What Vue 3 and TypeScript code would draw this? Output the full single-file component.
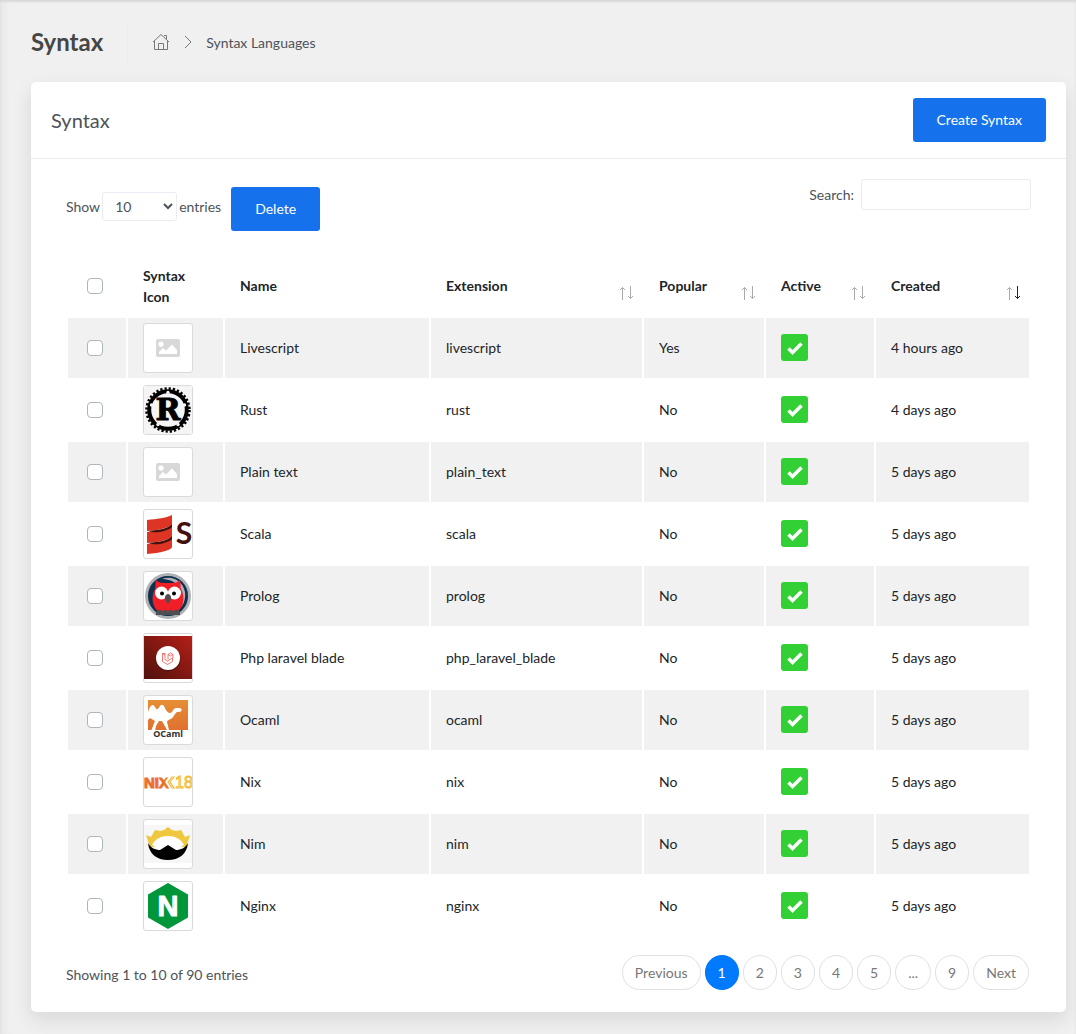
<script setup lang="ts">
import { ref } from 'vue'

interface Row {
  name: string
  extension: string
  popular: boolean
  created: string
  icon: string
}

const rows: Row[] = [
  { name: 'Livescript', extension: 'livescript', popular: true, created: '4 hours ago', icon: 'none' },
  { name: 'Rust', extension: 'rust', popular: false, created: '4 days ago', icon: 'rust' },
  { name: 'Plain text', extension: 'plain_text', popular: false, created: '5 days ago', icon: 'none' },
  { name: 'Scala', extension: 'scala', popular: false, created: '5 days ago', icon: 'scala' },
  { name: 'Prolog', extension: 'prolog', popular: false, created: '5 days ago', icon: 'prolog' },
  { name: 'Php laravel blade', extension: 'php_laravel_blade', popular: false, created: '5 days ago', icon: 'laravel' },
  { name: 'Ocaml', extension: 'ocaml', popular: false, created: '5 days ago', icon: 'ocaml' },
  { name: 'Nix', extension: 'nix', popular: false, created: '5 days ago', icon: 'nix' },
  { name: 'Nim', extension: 'nim', popular: false, created: '5 days ago', icon: 'nim' },
  { name: 'Nginx', extension: 'nginx', popular: false, created: '5 days ago', icon: 'nginx' },
]

const sortable = ['Extension', 'Popular', 'Active', 'Created']
const pages = ['Previous', '1', '2', '3', '4', '5', '...', '9', 'Next']
const current = ref('1')
const pageSize = ref('10')
const search = ref('')
const selected = ref<string[]>([])

function toggleAll(event: Event) {
  const on = (event.target as HTMLInputElement).checked
  selected.value = on ? rows.map((row) => row.name) : []
}
</script>

<template>
  <div class="page">
    <header class="page-head">
      <h1>Syntax</h1>
      <nav class="crumbs" aria-label="Breadcrumb">
        <a href="#" class="home" aria-label="Home">
          <svg width="18" height="18" viewBox="0 0 18 18" fill="none" stroke="#777" stroke-width="1">
            <path d="M1 9 9 1.500 17 9M2.500 8v8.500h13V8M6.500 16.500v-6h5v6M12 2.500h2.500V6" />
          </svg>
        </a>
        <svg class="chevron" width="8" height="14" viewBox="0 0 8 14" fill="none" stroke="#777">
          <path d="M1 1l6 6-6 6" />
        </svg>
        <span>Syntax Languages</span>
      </nav>
    </header>

    <main class="card">
      <div class="card-head">
        <h2>Syntax</h2>
        <button type="button" class="btn">Create Syntax</button>
      </div>

      <div class="card-body">
        <div class="toolbar">
          <div class="tools">
            <label class="length">
              Show
              <select v-model="pageSize">
                <option>10</option>
                <option>25</option>
                <option>50</option>
              </select>
              entries
            </label>
            <button type="button" class="btn">Delete</button>
          </div>
          <label class="search">
            Search:
            <input v-model="search" type="search" />
          </label>
        </div>

        <table>
          <colgroup>
            <col class="c-check" />
            <col class="c-icon" />
            <col class="c-name" />
            <col class="c-ext" />
            <col class="c-pop" />
            <col class="c-act" />
            <col class="c-date" />
          </colgroup>
          <thead>
            <tr>
              <th><input type="checkbox" aria-label="Select all" @change="toggleAll" /></th>
              <th>Syntax Icon</th>
              <th>Name</th>
              <th v-for="title in sortable" :key="title">
                {{ title }}
                <button type="button" class="sort" :aria-label="'Sort by ' + title">
                  <svg width="15" height="14" viewBox="0 0 15 14" fill="none" stroke="#aaa">
                    <path d="M3.500 14V1.500M1 4l2.500-2.500L6 4" />
                    <path :class="{ on: title === 'Created' }" d="M11.500 0v12.500M9 10l2.500 2.500L14 10" />
                  </svg>
                </button>
              </th>
            </tr>
          </thead>
          <tbody>
            <tr v-for="row in rows" :key="row.name">
              <td><input v-model="selected" type="checkbox" :value="row.name" :aria-label="'Select ' + row.name" /></td>
              <td>
                <div class="thumb">
                  <svg v-if="row.icon === 'none'" viewBox="0 0 48 48">
                    <path fill="#d8d8d8" fill-rule="evenodd" d="M14 15h20a2 2 0 0 1 2 2v14a2 2 0 0 1-2 2H14a2 2 0 0 1-2-2V17a2 2 0 0 1 2-2ZM17 17.500a2.700 2.700 0 1 0 .01 0ZM15 30h18v-4l-5-5.500-6 6-3-2.500-4 4Z" />
                  </svg>

                  <svg v-else-if="row.icon === 'rust'" viewBox="0 0 48 48">
                    <rect width="48" height="48" fill="#f5f5f5" />
                    <circle cx="24" cy="24" r="21.500" fill="none" stroke="#000" stroke-width="2.500" stroke-dasharray="2.250 1.972" />
                    <circle cx="24" cy="24" r="18.800" fill="none" stroke="#000" stroke-width="4" />
                    <g fill="#f5f5f5">
                      <circle cx="24" cy="6.500" r="1.700" />
                      <circle cx="7.500" cy="19" r="1.700" />
                      <circle cx="40.500" cy="19" r="1.700" />
                      <circle cx="14" cy="38.500" r="1.700" />
                      <circle cx="34" cy="38.500" r="1.700" />
                    </g>
                    <text x="24" y="34" text-anchor="middle" class="rust-r">R</text>
                  </svg>

                  <svg v-else-if="row.icon === 'scala'" viewBox="0 0 48 48">
                    <g fill="#de3423">
                      <path d="M3 10c10-1 19-2 25-5v9c0 3-12 6-25 7z" />
                      <path d="M3 22c11-1 21-3 25-6v10c0 3-12 6-25 7z" />
                      <path d="M3 34c11-1 21-3 25-6v9c0 3-12 6-25 7z" />
                    </g>
                    <g fill="#43100d">
                      <path d="M4 21c12-1 21-3 24-7v3c-4 4-14 6-20 5z" />
                      <path d="M4 33c12-1 21-3 24-7v3c-4 4-14 6-20 5z" />
                    </g>
                    <text x="40" y="34" text-anchor="middle" class="scala-s">S</text>
                  </svg>

                  <svg v-else-if="row.icon === 'prolog'" viewBox="0 0 48 48">
                    <circle cx="24" cy="24" r="21.500" fill="#102f4c" stroke="#aeb2b7" stroke-width="3" />
                    <path fill="#aeb2b7" d="M18 7c10-4 21 2 23 13 1 8-2 14-6 17 8-15 2-29-17-30Z" />
                    <path fill="#f01f27" d="M12 8c3 3 6 3 12 3s9 0 12-3c1 4 0 6 1 9 5 9 2 21-6 24H17C9 38 6 26 11 17c1-4 0-6 1-9Z" />
                    <circle cx="17.500" cy="21" r="6.500" fill="#fff" />
                    <circle cx="30.500" cy="21" r="6.500" fill="#fff" />
                    <circle cx="18" cy="21.500" r="2" />
                    <circle cx="30" cy="21.500" r="2" />
                    <path fill="#4d4f53" d="M24 22c4 1 4 5 0 10-4-5-4-9 0-10ZM12 40c2-3 6-3 7 0 1-3 4-3 5 0 1-3 4-3 5 0 1-3 5-3 7 0v3H12Z" />
                  </svg>

                  <svg v-else-if="row.icon === 'laravel'" viewBox="0 0 48 48">
                    <defs>
                      <linearGradient id="wine" x1="0" y1="1" x2="1" y2="0">
                        <stop offset="0" stop-color="#50110d" />
                        <stop offset="1" stop-color="#b51f17" />
                      </linearGradient>
                    </defs>
                    <rect y="2" width="48" height="43" fill="url(#wine)" />
                    <circle cx="24" cy="25" r="12.500" fill="#35100d" opacity=".5" />
                    <circle cx="24" cy="24" r="12" fill="#fff" />
                    <path fill="none" stroke="#f0574f" stroke-width=".8" d="M18.500 19.500v8l5 3 5-3v-3.500l-5 3-2.500-1.500v-6l-2.500 0 2.500 1.500M24 20.500v5M29 24v-3.500l-2.500-1.500-2.500 1.500 2.500 1.500 2.500-1.500" />
                  </svg>

                  <svg v-else-if="row.icon === 'ocaml'" viewBox="0 0 48 48">
                    <defs>
                      <linearGradient id="sand" x1="0" y1="0" x2="0" y2="1">
                        <stop offset="0" stop-color="#e58f35" />
                        <stop offset="1" stop-color="#e07030" />
                      </linearGradient>
                    </defs>
                    <rect x="4" y="4" width="40" height="30" fill="url(#sand)" />
                    <path fill="#fff" d="M4 16c2-7 5-9 7-5 2 4 3 2 5-1 3-3 4 0 6 4 2 3 4 4 6 2 2-5 5-4 7-4 4 0 3 4 0 4-3-1-4 3-6 5-2 3-5 2-6 5l2 8h-2l-5-9h-3l-3 5-1 5h-4l4-10-5-3-2 2Z" />
                    <text x="24" y="41" text-anchor="middle" class="ocaml-word">OCaml</text>
                  </svg>

                  <svg v-else-if="row.icon === 'nix'" viewBox="0 0 48 48">
                    <text x="0" y="30" class="nix-word">NIX</text>
                    <path fill="#fff" d="M25 18l-4 6 4 6h6v-12Z" />
                    <path fill="none" stroke="#efbd3c" stroke-width="1.200" d="M30 19l-4 5 4 6h-2l-4-6 4-5Z" />
                    <text x="31" y="30" class="nix-num">18</text>
                  </svg>

                  <svg v-else-if="row.icon === 'nim'" viewBox="0 0 48 48">
                    <rect y="5" width="48" height="38" fill="#f7f7f7" />
                    <path fill="#efc83f" d="M2 15l5 2 4-7 5 1 4-1 4-3 4 3 4 1 5-1 4 7 5-2-4 12H6Z" />
                    <path fill="#fff" d="M8 25c3-6 9-9 16-9s13 3 16 9l-8 5H16Z" />
                    <path d="M4 23c3 5 7 7 12 7l8-5 8 5c5 0 9-2 12-7-1 11-9 17-20 17S5 34 4 23Z" />
                  </svg>

                  <svg v-else viewBox="0 0 48 48">
                    <path fill="#009639" d="M24 1l20 11.500v23L24 47 4 35.500v-23Z" />
                    <text x="24" y="34" text-anchor="middle" class="nginx-n">N</text>
                  </svg>
                </div>
              </td>
              <td>{{ row.name }}</td>
              <td>{{ row.extension }}</td>
              <td>{{ row.popular ? 'Yes' : 'No' }}</td>
              <td>
                <svg class="active" width="27" height="27" viewBox="0 0 27 27" role="img" aria-label="Active">
                  <rect width="27" height="27" rx="3" fill="#32cf35" />
                  <path d="M7.500 14.500l4 4 9-9" fill="none" stroke="#fff" stroke-width="3.500" />
                </svg>
              </td>
              <td>{{ row.created }}</td>
            </tr>
          </tbody>
        </table>

        <footer class="table-foot">
          <p>Showing 1 to 10 of 90 entries</p>
          <nav class="pages" aria-label="Pages">
            <button
              v-for="page in pages"
              :key="page"
              type="button"
              :class="{ current: page === current }"
              @click="current = page"
            >{{ page }}</button>
          </nav>
        </footer>
      </div>
    </main>
  </div>
</template>

<style>
html {
  background: #f0f0f0;
}
body {
  margin: 0;
}
</style>

<style scoped>
* {
  box-sizing: border-box;
}
.page {
  min-height: 100vh;
  padding: 20px 10px 22px 31px;
  background: #f0f0f0;
  box-shadow: inset 0 2px 2px #d8d8d8, inset 10px 0 10px -8px #e2e2e2;
  font: 14px/21px Lato, sans-serif;
  color: #4d5359;
}
.page-head {
  display: flex;
  align-items: center;
  height: 62px;
  padding-bottom: 18px;
}
h1 {
  margin: 0;
  padding-right: 24px;
  border-right: 1px solid #ececec;
  font-size: 24px;
  line-height: 40px;
  font-weight: 700;
  color: #464646;
}
.crumbs {
  display: flex;
  align-items: center;
  padding-left: 24px;
}
.home {
  display: flex;
}
.chevron {
  margin: 0 14px;
}
.card {
  background: #fff;
  border-radius: 5px;
  box-shadow: 0 8px 20px rgba(0, 0, 0, 0.1);
}
.card-head {
  display: flex;
  justify-content: space-between;
  align-items: center;
  padding: 16px 20px;
  border-bottom: 1px solid #ebebeb;
}
h2 {
  margin: 0;
  font-size: 20px;
  font-weight: 400;
}
.btn {
  height: 44px;
  padding: 0 24px 2px;
  border: 0;
  border-radius: 3px;
  background: #1672ec;
  color: #fff;
  font: inherit;
}
.card-body {
  padding: 20px 35px 22px;
}
.toolbar {
  display: flex;
  justify-content: space-between;
  align-items: flex-start;
  height: 75px;
}
.tools {
  display: flex;
  padding-top: 8px;
  gap: 10px;
}
.length {
  display: flex;
  align-items: center;
  gap: 2px;
  height: 39px;
}
select {
  width: 75px;
  height: 29px;
  padding: 0 8px;
  border: 1px solid #ebecf3;
  border-radius: 3px;
  background: #fff;
  color: #4d5359;
  font: inherit;
}
.search {
  display: flex;
  align-items: center;
  gap: 7px;
}
.search input {
  width: 170px;
  height: 31px;
  padding: 4px 8px;
  border: 1px solid #ebebeb;
  border-radius: 3px;
  font: inherit;
}
table {
  width: 100%;
  table-layout: fixed;
  border-spacing: 2px;
  color: #212529;
}
.c-check { width: 58px; }
.c-icon { width: 95px; }
.c-name { width: 204px; }
.c-ext { width: 211px; }
.c-pop { width: 120px; }
.c-act { width: 108px; }
.c-date { width: 153px; }
th,
td {
  height: 60px;
  padding: 5px 15px;
  text-align: left;
  vertical-align: middle;
}
th:nth-child(n + 3),
td:nth-child(n + 3) {
  padding-bottom: 7px;
}
th {
  position: relative;
  font-weight: 700;
}
tbody tr:nth-child(odd) td {
  background: #f1f1f1;
}
input[type='checkbox'] {
  appearance: none;
  display: block;
  width: 16px;
  height: 16px;
  margin: 0 4px;
  border: 1px solid #adb5bd;
  border-radius: 4px;
  background: #fff;
}
input[type='checkbox']:checked {
  background: #1672ec;
}
.sort {
  position: absolute;
  right: 8px;
  bottom: 16px;
  display: flex;
  padding: 0;
  border: 0;
  background: none;
}
.sort .on {
  stroke: #212529;
}
.thumb {
  width: 50px;
  height: 50px;
  border: 1px solid #dadada;
  border-radius: 3px;
  background: #fff;
}
.thumb svg,
.active {
  display: block;
}
.rust-r {
  font: 700 30px 'DejaVu Serif', serif;
  stroke: #000;
  stroke-width: 1px;
}
.scala-s {
  font: 700 30px Lato, sans-serif;
  fill: #43100d;
}
.ocaml-word {
  font: 700 9px 'Noto Sans', sans-serif;
  fill: #333;
}
.nix-word {
  font: 700 15px 'Liberation Sans', sans-serif;
  fill: #ed6f2d;
  stroke: #ed6f2d;
  stroke-width: 1px;
}
.nix-num {
  font: 400 16px 'Liberation Sans', sans-serif;
  fill: #fff;
  stroke: #efbd3c;
  stroke-width: 1px;
}
.nginx-n {
  font: 700 29px 'Liberation Sans', sans-serif;
  fill: #fff;
  stroke: #fff;
  stroke-width: 1px;
  stroke-linejoin: round;
}
.table-foot {
  display: flex;
  justify-content: space-between;
  align-items: center;
  padding: 17px 2px 0 0;
}
.table-foot p {
  margin: 4px 0 0;
}
.pages {
  display: flex;
  gap: 4px;
}
.pages button {
  height: 35px;
  padding: 0 12px;
  border: 1px solid #dfe0e2;
  border-radius: 18px;
  background: #fff;
  color: #777;
  font: inherit;
}
.pages .current {
  border-color: #007bff;
  background: #007bff;
  color: #fff;
}
</style>
